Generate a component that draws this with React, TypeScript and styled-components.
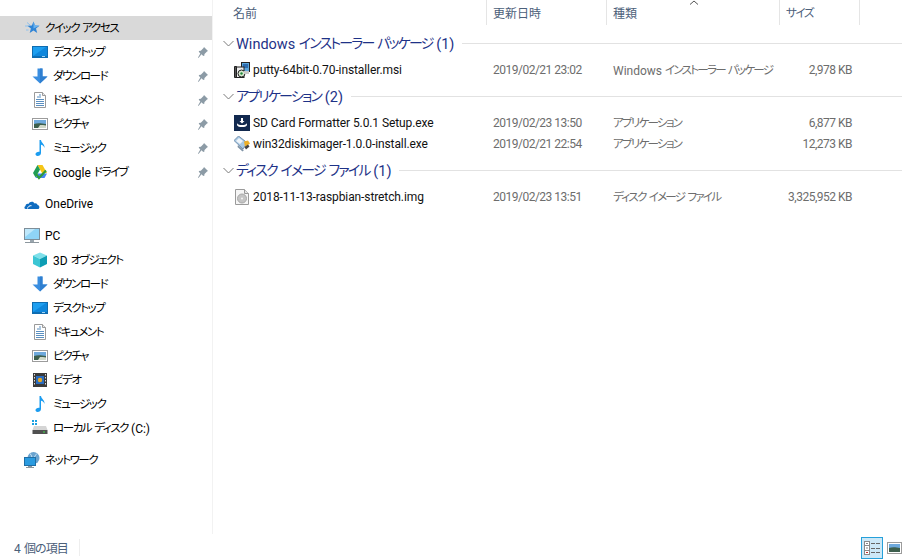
import { ReactNode } from "react";
import styled, { createGlobalStyle } from "styled-components";

const GlobalStyle = createGlobalStyle`
  html, body {
    margin: 0;
    padding: 0;
    background: #fff;
  }
  body {
    font-family: Roboto, "Noto Sans CJK JP", sans-serif;
    font-size: 12px;
    font-feature-settings: "palt";
    color: #000;
  }
`;

const Window = styled.div`
  width: 909px;
  height: 559px;
  display: flex;
  flex-direction: column;
  overflow: hidden;
`;

const Body = styled.div`
  flex: 1;
  min-height: 0;
  display: flex;
`;

const Sidebar = styled.nav`
  width: 212px;
  box-sizing: content-box;
  padding-top: 16px;
  border-right: 1px solid #f2f2f2;
  margin-bottom: 2px;
`;

const NavRow = styled.div<{ $level: number; $active?: boolean; $gap?: number }>`
  height: 24px;
  display: flex;
  align-items: center;
  margin-top: ${(p) => p.$gap ?? 0}px;
  padding-left: ${(p) => (p.$level === 2 ? 32 : 24)}px;
  background: ${(p) => (p.$active ? "#d9d9d9" : "transparent")};
  white-space: nowrap;
`;

const NavIcon = styled.span`
  width: 16px;
  height: 16px;
  flex: none;
  margin-right: 5px;
  display: block;
  & svg {
    display: block;
  }
`;

const NavLabel = styled.span`
  flex: 1;
  padding-bottom: 1px;
`;

// Meiryo UI has much narrower kana than Noto, so kana runs get squeezed
const Kana = styled.span`
  font-size: 0.96em;
  letter-spacing: -0.125em;
  vertical-align: 1px;
`;

const PinSlot = styled.span`
  width: 10px;
  height: 11px;
  margin-right: 4px;
  & svg {
    display: block;
  }
`;

const Main = styled.main`
  flex: 1;
  min-width: 0;
  position: relative;
`;

const columns = "268px 120px 173px 80px";

const HeaderRow = styled.div`
  display: grid;
  grid-template-columns: ${columns};
  height: 25px;
  margin-left: 6px;
  margin-bottom: 7px;
`;

const HeaderCell = styled.div<{ $first?: boolean }>`
  display: flex;
  align-items: center;
  padding-left: ${(p) => (p.$first ? 14 : 6)}px;
  border-right: 1px solid #e5e5e5;
  color: #4c607a;
  font-size: 12px;
  padding-bottom: 1px;
  box-sizing: border-box;
`;

const SortArrow = styled.svg`
  position: absolute;
  left: 476px;
  top: 0;
`;

const GroupHeading = styled.div`
  display: flex;
  align-items: center;
  height: 22px;
  margin-top: 5px;
  margin-bottom: 5px;
  padding-left: 10px;
`;

const Chevron = styled.svg`
  flex: none;
  margin-right: 2px;
`;

const GroupTitle = styled.span`
  color: #1e3287;
  font-size: 14.5px;
  margin-right: 8px;
  padding-bottom: 2px;
  white-space: nowrap;
`;

const GroupRule = styled.span`
  flex: 1;
  height: 1px;
  background: #e2e2e2;
  margin-right: 7px;
`;

const FileRow = styled.div`
  display: grid;
  grid-template-columns: ${columns};
  height: 21px;
  margin-left: 6px;
  align-items: center;
`;

const NameCell = styled.div`
  display: flex;
  align-items: center;
  padding-left: 15px;
  white-space: nowrap;
  color: #111;
  letter-spacing: -0.1px;
  & svg {
    display: block;
    flex: none;
    margin-right: 3px;
  }
`;

const MetaCell = styled.div<{ $right?: boolean; $tight?: boolean }>`
  padding: 0 8px 0 6px;
  color: #6d6d6d;
  white-space: nowrap;
  letter-spacing: ${(p) => (p.$tight ? "-0.5px" : "0")};
  text-align: ${(p) => (p.$right ? "right" : "left")};
  & span {
    letter-spacing: -0.15em;
  }
`;

const StatusBar = styled.footer`
  height: 23px;
  flex: none;
  display: flex;
  align-items: center;
  padding-left: 14px;
  color: #4c607a;
  font-size: 12px;
`;

const StatusCount = styled.span`
  padding-right: 11px;
  border-right: 1px solid #eee;
  letter-spacing: -0.9px;
  word-spacing: 2px;
`;

const ViewButtons = styled.div`
  margin-left: auto;
  margin-right: 4px;
  display: flex;
  align-items: center;
`;

const ViewButton = styled.span<{ $on?: boolean }>`
  width: 22px;
  height: 22px;
  box-sizing: border-box;
  display: flex;
  align-items: center;
  justify-content: center;
  background: ${(p) => (p.$on ? "#cce8f7" : "transparent")};
  border: 1px solid ${(p) => (p.$on ? "#26a0da" : "transparent")};
`;

const squeezeKana = (text: string): ReactNode =>
  text
    .split(/([\u30a0-\u30ff]+)/)
    .map((part, i) => (i % 2 ? <Kana key={i}>{part}</Kana> : part));

const Star = () => (
  <svg width="16" height="16" viewBox="0 0 16 16">
    <path d="M9.500 1.500l1.500 4 4.500.3-3.500 2.800 1.200 4.400-3.700-2.500-3.800 2.500 1.200-4.400-3.500-2.800 4.500-.3z" fill="#2f84d6" />
    <path d="M9.500 1.500l1.500 4 4.500.3-6 2.700z" fill="#6db3ee" />
    <path d="M3 2.500l3 2.500M1 6h3M2 10h2.500" stroke="#8fc2ee" strokeWidth="1" />
  </svg>
);

const Desktop = () => (
  <svg width="16" height="16" viewBox="0 0 16 16">
    <rect x="0.500" y="2.500" width="15" height="11" fill="#1e9ff0" stroke="#0f6cb0" />
    <path d="M1 13V12l13-9h1v10z" fill="#0f87dc" />
    <rect x="1" y="12" width="14" height="1" fill="#0e6fb5" />
    <rect x="10" y="12" width="3" height="1" fill="#9fd4f5" />
  </svg>
);

const Download = () => (
  <svg width="16" height="16" viewBox="0 0 16 16">
    <path d="M5.500 0.500h5v8h5L8 15.500 0.500 8.500h5z" fill="#3a8ee0" />
    <path d="M8 0.500h2.500v8h5L8 15.500z" fill="#2f7fd0" />
  </svg>
);

const Doc = () => (
  <svg width="16" height="16" viewBox="0 0 16 16">
    <path d="M2.500 0.500h8l3 3v12h-11z" fill="#fff" stroke="#9a9a9a" />
    <path d="M10.500 0.500v3h3" fill="#e8e8e8" stroke="#9a9a9a" />
    <path d="M7 3h2M5 5h4M4 7.500h8M4 9.500h8M4 11.500h8M4 13.500h8" stroke="#5a8fc0" />
  </svg>
);

const Picture = () => (
  <svg width="16" height="16" viewBox="0 0 16 16">
    <rect x="0.500" y="2.500" width="15" height="11" fill="#fff" stroke="#9c9c9c" />
    <rect x="2" y="4" width="12" height="8" fill="#6ea9dc" />
    <path d="M2 8c3-1 6-1 12 0v4H2z" fill="#3d5f4d" />
    <path d="M8 9c2 0 4 0 6 .5V12H6z" fill="#cfd8c8" />
  </svg>
);

const Music = () => (
  <svg width="16" height="16" viewBox="0 0 16 16">
    <path d="M7.500 0h1.500c.3 3 4 4 3.500 8-.5-2-2-3-3.500-3.300V13c0 1.700-1.600 3-3.400 3C4 16 3.500 14.800 3.500 14c0-1.500 2-2.600 4-2.300z" fill="#1b9cf0" />
  </svg>
);

const Drive = () => (
  <svg width="16" height="16" viewBox="0 0 16 16">
    <path d="M5.500 1h5l4.500 8h-5z" fill="#f5c518" />
    <path d="M5.500 1L1 9l2.500 4.500L8 5.500z" fill="#1f9d57" />
    <path d="M3.500 14h9l2.500-4.500H6z" fill="#4285f4" />
    <path d="M4 10l3 4 7-7.500" stroke="#2e9b3a" strokeWidth="2.200" fill="none" />
  </svg>
);

const OneDrive = () => (
  <svg width="16" height="16" viewBox="0 0 16 16">
    <path d="M1.500 13C0 13 0 10.500 1.500 10c0-2 2-2.500 3-2 1-2.500 5-3 6-.5 1.500-.5 3 .5 3 1.500 2 .200 2.500 3 1 4z" fill="#0f6cc0" />
    <path d="M3.500 12.500c.5-2 2-3 4-2.800" stroke="#fff" strokeWidth="1" fill="none" />
  </svg>
);

const Computer = () => (
  <svg width="16" height="16" viewBox="0 0 16 16">
    <rect x="0.500" y="0.500" width="15" height="11" fill="#8fd4f7" stroke="#7e8e99" />
    <path d="M1 1h10L1 9z" fill="#bfe8fb" />
    <path d="M6 12h4v2H6z" fill="#9aa6ae" />
    <path d="M1 14.500h14" stroke="#8c979e" />
  </svg>
);

const Cube = () => (
  <svg width="16" height="16" viewBox="0 0 16 16">
    <path d="M8 0.500l7 3-7 3.500-7-3.500z" fill="#7fe0ea" />
    <path d="M1 3.500L8 7v8.500L1 12z" fill="#3cc6d4" />
    <path d="M15 3.500L8 7v8.500l7-3.500z" fill="#0d9db4" />
  </svg>
);

const Film = () => (
  <svg width="16" height="16" viewBox="0 0 16 16">
    <rect x="1" y="1" width="14" height="14" fill="#3a3a3a" />
    <path d="M2 2h1v1.500H2zM2 5h1v1.500H2zM2 8h1v1.500H2zM2 11h1v1.500H2zM13 2h1v1.500h-1zM13 5h1v1.500h-1zM13 8h1v1.500h-1zM13 11h1v1.500h-1z" fill="#ddd" />
    <rect x="4" y="4" width="8" height="8" fill="#2a6cc0" />
    <circle cx="8" cy="8" r="2.200" fill="#e8a820" />
  </svg>
);

const LocalDisk = () => (
  <svg width="16" height="16" viewBox="0 0 16 16">
    <path d="M0 0h2v2H0zM3 0h2v2H3zM0 3h2v2H0zM3 3h2v2H3z" fill="#1ba1e2" />
    <path d="M2 6h12l1.500 4h-15z" fill="#d5d5d5" />
    <rect x="0.500" y="10" width="15" height="4" fill="#505050" />
    <rect x="11" y="11.500" width="2" height="1" fill="#3fdc4a" />
  </svg>
);

const Network = () => (
  <svg width="16" height="16" viewBox="0 0 16 16">
    <circle cx="9.500" cy="6" r="6" fill="#6aa3cf" />
    <path d="M6 1.500c2 2 3 6 2 9M13 1.500c-3 3-4 6-2 10" stroke="#cfe6f5" fill="none" />
    <rect x="0.500" y="5.500" width="11" height="8" fill="#2a9be0" stroke="#1f6ea5" />
    <path d="M4 14h4v1H4zM2 15h8v1H2z" fill="#8c979e" />
  </svg>
);

const Pin = () => (
  <svg width="10" height="11" viewBox="0 0 10 11">
    <path d="M6 0l4 4-1 .5-2.500 2.500-.3 2-1.200-.2-1.500-1.500L0.500 11 0 10.500 2.300 6.500 1 5l-.2-1 2-.300L5.500 1z" fill="#8c9ba6" />
  </svg>
);

const Msi = () => (
  <svg width="16" height="16" viewBox="0 0 16 16">
    <rect x="7.500" y="0.500" width="8" height="9" fill="#5aa6dc" stroke="#222" />
    <rect x="9" y="2" width="5" height="4" fill="#2c6cb0" />
    <rect x="2" y="5" width="8" height="10.500" fill="#eee" stroke="#222" />
    <path d="M0.500 4.500h2v11h-2z" fill="#555" stroke="#222" />
    <circle cx="7.500" cy="11.500" r="3.500" fill="#d8e8d0" stroke="#222" />
    <circle cx="7.500" cy="11.500" r="1.200" fill="#1f8a3a" />
    <path d="M10 9h5v3h-5z" fill="#c8c8c8" />
  </svg>
);

const SdCard = () => (
  <svg width="16" height="16" viewBox="0 0 16 16">
    <rect width="16" height="16" fill="#12294f" />
    <path d="M3 8v1.500c0 2 2 2.500 5 2.500s5-.5 5-2.500V8c-.5 1.500-2 2-5 2s-4.500-.5-5-2z" fill="#fff" />
    <path d="M7 3h2v3h1.500L8 8.500 5.500 6H7z" fill="#fff" />
  </svg>
);

const DiskImager = () => (
  <svg width="16" height="16" viewBox="0 0 16 16">
    <path d="M0 4.500L4.500 0l9 7-4.500 6z" fill="#a9c9e4" stroke="#5f7f9f" strokeWidth="0.800" />
    <path d="M2 5l3-3 4 3-3 3z" fill="#f0f5fa" />
    <path d="M4 9l5 4.500 1 .5-1.500 1.500-5-4.500z" fill="#7f93a6" />
    <path d="M10 5.500l4-1 2 3-5 3.500z" fill="#eeb028" />
    <path d="M10.500 11l3.500-2.500 1.500 2-3.500 3z" fill="#444" />
  </svg>
);

const DiskFile = () => (
  <svg width="16" height="16" viewBox="0 0 16 16">
    <path d="M1.500 0.500h9l4 4v11h-13z" fill="#f6f6f6" stroke="#9a9a9a" />
    <path d="M10.500 0.500v4h4" fill="#e4e4e4" stroke="#9a9a9a" />
    <circle cx="8" cy="9.500" r="4.500" fill="#c4c4c4" stroke="#a8a8a8" />
    <circle cx="8" cy="9.500" r="1" fill="#f4f4f4" />
  </svg>
);

const DetailsView = () => (
  <svg width="16" height="14" viewBox="0 0 16 14">
    <rect x="0.500" y="0.500" width="5" height="13" fill="#fff" stroke="#8a8a8a" />
    <path d="M1 4.500h4M1 9.500h4" stroke="#8a8a8a" />
    <path d="M2 2h2v1H2zM2 6.500h2v1H2z" fill="#8a8a8a" />
    <path d="M2 11h2v1H2z" fill="#c03030" />
    <path d="M7 2.500h4M12 2.500h4M7 7.500h4M12 7.500h4M7 11.500h4M12 11.500h4" stroke="#666" />
  </svg>
);

const ThumbView = () => (
  <svg width="15" height="12" viewBox="0 0 15 12">
    <rect x="0.500" y="0.500" width="14" height="11" fill="#fff" stroke="#9c9c9c" />
    <rect x="2" y="2" width="11" height="8" fill="#6ea9dc" />
    <path d="M2 6c3-1 6-1 11 0v4H2z" fill="#3d5f4d" />
  </svg>
);

interface NavItem {
  label: string;
  icon: ReactNode;
  level: number;
  pinned?: boolean;
  active?: boolean;
  gap?: number;
}

const navItems: NavItem[] = [
  { label: "クイック アクセス", icon: <Star />, level: 1, active: true },
  { label: "デスクトップ", icon: <Desktop />, level: 2, pinned: true },
  { label: "ダウンロード", icon: <Download />, level: 2, pinned: true },
  { label: "ドキュメント", icon: <Doc />, level: 2, pinned: true },
  { label: "ピクチャ", icon: <Picture />, level: 2, pinned: true },
  { label: "ミュージック", icon: <Music />, level: 2, pinned: true },
  { label: "Google ドライブ", icon: <Drive />, level: 2, pinned: true },
  { label: "OneDrive", icon: <OneDrive />, level: 1, gap: 8 },
  { label: "PC", icon: <Computer />, level: 1, gap: 8 },
  { label: "3D オブジェクト", icon: <Cube />, level: 2 },
  { label: "ダウンロード", icon: <Download />, level: 2 },
  { label: "デスクトップ", icon: <Desktop />, level: 2 },
  { label: "ドキュメント", icon: <Doc />, level: 2 },
  { label: "ピクチャ", icon: <Picture />, level: 2 },
  { label: "ビデオ", icon: <Film />, level: 2 },
  { label: "ミュージック", icon: <Music />, level: 2 },
  { label: "ローカル ディスク (C:)", icon: <LocalDisk />, level: 2 },
  { label: "ネットワーク", icon: <Network />, level: 1, gap: 8 },
];

interface FileItem {
  name: string;
  icon: ReactNode;
  date: string;
  type: string;
  size: string;
}

const groups: { title: string; files: FileItem[] }[] = [
  {
    title: "Windows インストーラー パッケージ (1)",
    files: [
      {
        name: "putty-64bit-0.70-installer.msi",
        icon: <Msi />,
        date: "2019/02/21 23:02",
        type: "Windows インストーラー パッケージ",
        size: "2,978 KB",
      },
    ],
  },
  {
    title: "アプリケーション (2)",
    files: [
      {
        name: "SD Card Formatter 5.0.1 Setup.exe",
        icon: <SdCard />,
        date: "2019/02/23 13:50",
        type: "アプリケーション",
        size: "6,877 KB",
      },
      {
        name: "win32diskimager-1.0.0-install.exe",
        icon: <DiskImager />,
        date: "2019/02/21 22:54",
        type: "アプリケーション",
        size: "12,273 KB",
      },
    ],
  },
  {
    title: "ディスク イメージ ファイル (1)",
    files: [
      {
        name: "2018-11-13-raspbian-stretch.img",
        icon: <DiskFile />,
        date: "2019/02/23 13:51",
        type: "ディスク イメージ ファイル",
        size: "3,325,952 KB",
      },
    ],
  },
];

export default function App() {
  return (
    <Window>
      <GlobalStyle />
      <Body>
        <Sidebar>
          {navItems.map((item, i) => (
            <NavRow key={i} $level={item.level} $active={item.active} $gap={item.gap}>
              <NavIcon>{item.icon}</NavIcon>
              <NavLabel>{squeezeKana(item.label)}</NavLabel>
              {item.pinned && (
                <PinSlot>
                  <Pin />
                </PinSlot>
              )}
            </NavRow>
          ))}
        </Sidebar>
        <Main>
          <HeaderRow>
            <HeaderCell $first>名前</HeaderCell>
            <HeaderCell>更新日時</HeaderCell>
            <HeaderCell>種類</HeaderCell>
            <HeaderCell>
              <span>{squeezeKana("サイズ")}</span>
            </HeaderCell>
          </HeaderRow>
          <SortArrow width="10" height="5" viewBox="0 0 10 5">
            <path d="M1 4.500L5 1l4 3.500" stroke="#555" fill="none" />
          </SortArrow>
          {groups.map((group) => (
            <section key={group.title}>
              <GroupHeading>
                <Chevron width="11" height="7" viewBox="0 0 11 7">
                  <path d="M0.500 1L5.500 6l5-5" stroke="#7a7a7a" fill="none" />
                </Chevron>
                <GroupTitle>{squeezeKana(group.title)}</GroupTitle>
                <GroupRule />
              </GroupHeading>
              {group.files.map((file) => (
                <FileRow key={file.name}>
                  <NameCell>
                    {file.icon}
                    {file.name}
                  </NameCell>
                  <MetaCell $tight>{file.date}</MetaCell>
                  <MetaCell>{squeezeKana(file.type)}</MetaCell>
                  <MetaCell $right $tight>
                    {file.size}
                  </MetaCell>
                </FileRow>
              ))}
            </section>
          ))}
        </Main>
      </Body>
      <StatusBar>
        <StatusCount>4 個の項目</StatusCount>
        <ViewButtons>
          <ViewButton $on>
            <DetailsView />
          </ViewButton>
          <ViewButton>
            <ThumbView />
          </ViewButton>
        </ViewButtons>
      </StatusBar>
    </Window>
  );
}
